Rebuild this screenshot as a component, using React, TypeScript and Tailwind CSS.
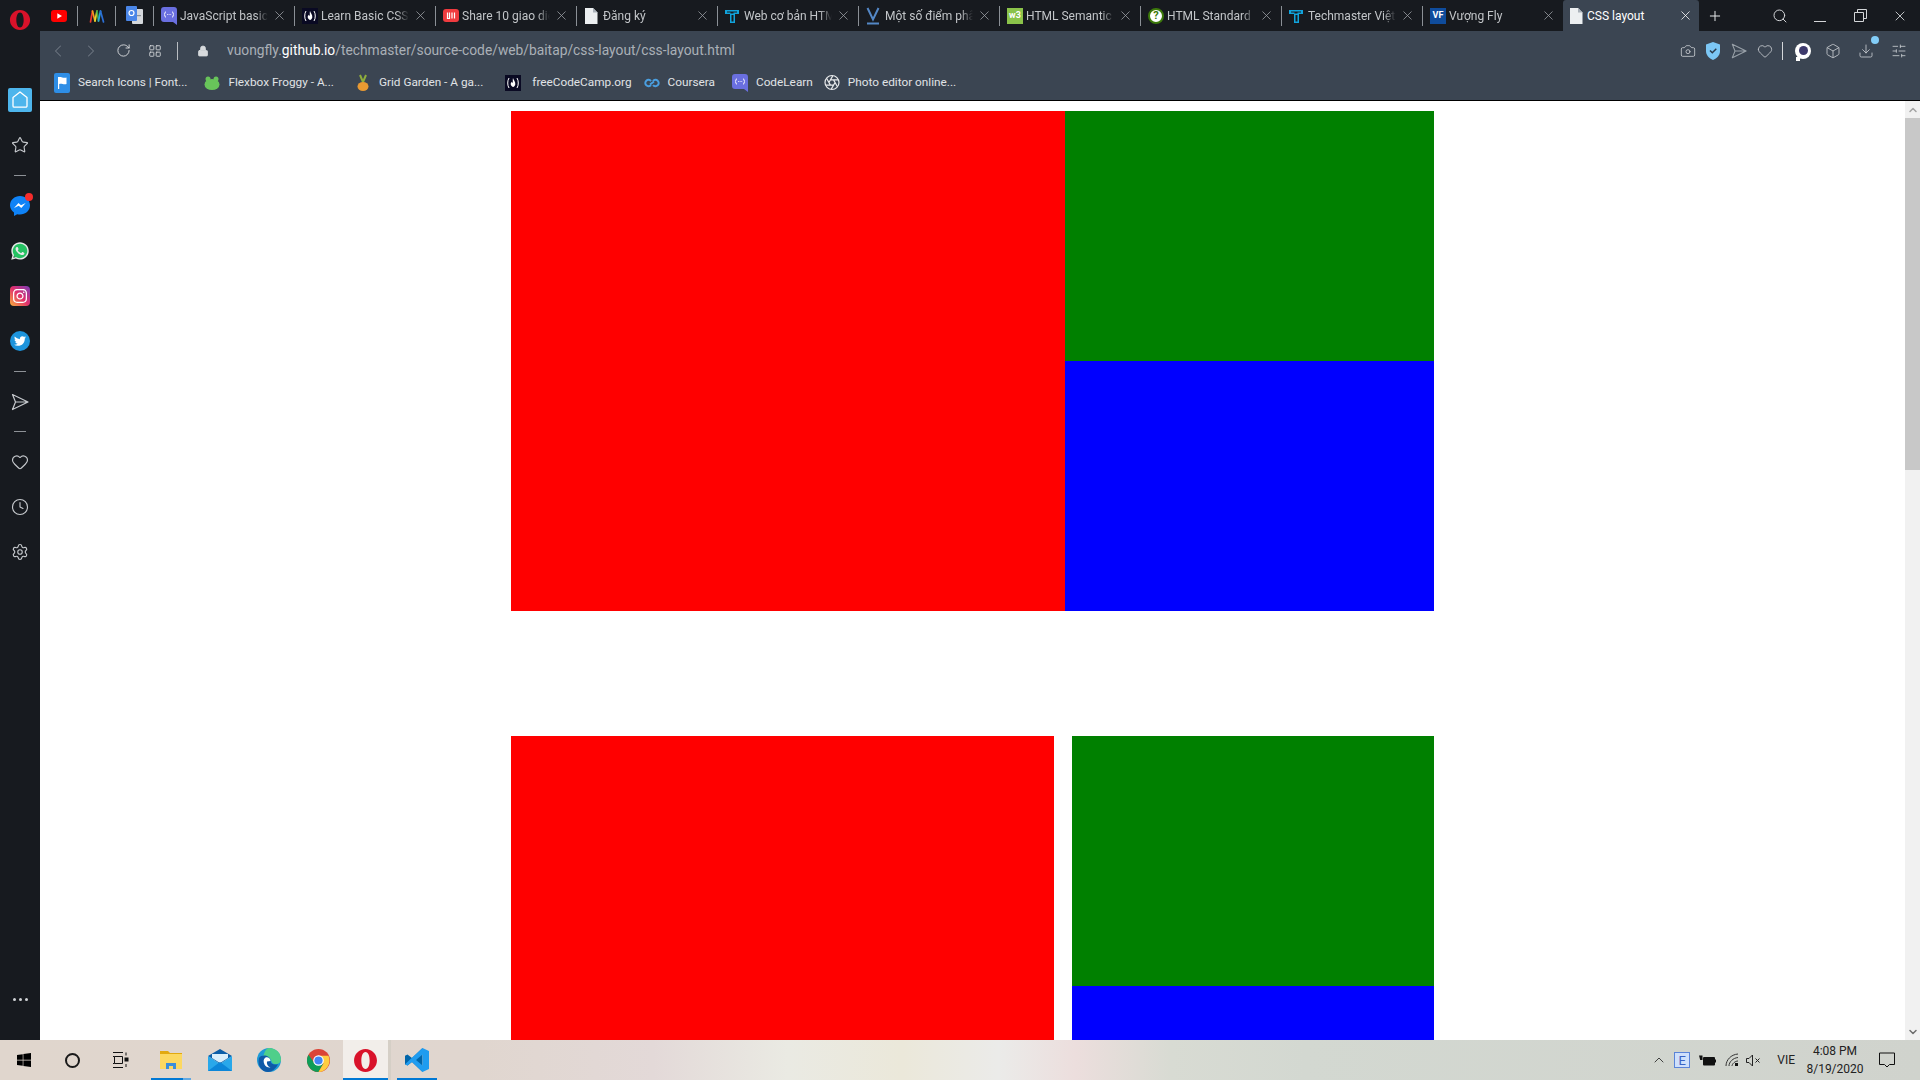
import React from 'react';
import {
  Box, Camera, ChevronLeft, ChevronRight, ChevronUp, Clock, Download, Heart, LayoutGrid, Lock, Plus, RotateCw,
  Search, Settings, SlidersHorizontal, Star, X,
} from 'lucide-react';
import { FaInstagram, FaTwitter, FaWhatsapp, FaWindows } from 'react-icons/fa';

const OperaLogo = ({ size }: { size: number }) => (
  <svg width={size} height={size} viewBox="0 0 24 24">
    <path fillRule="evenodd" fill="#d9122a" d="M12 1C5.900 1 1 6 1 12s4.900 11 11 11 11-5 11-11S18.100 1 12 1zm0 2.800c2.600 0 4 3.900 4 8.200s-1.400 8.200-4 8.200-4-3.900-4-8.200 1.400-8.200 4-8.200z" />
  </svg>
);

const FileIcon = () => (
  <svg width="14" height="16" viewBox="0 0 14 16">
    <path fill="#eceff1" d="M1 0h8l4.500 4.500V16H1z" />
    <path fill="#aab2ba" d="M9 0v4.500h4.500z" />
  </svg>
);

const YoutubeIcon = () => (
  <svg width="16" height="12" viewBox="0 0 16 12">
    <rect width="16" height="12" rx="3" fill="#f00" />
    <path d="M6.300 3.300v5.400L11 6z" fill="#fff" />
  </svg>
);

const RainbowIcon = () => (
  <svg width="16" height="16" viewBox="0 0 16 16" fill="none" strokeWidth="1.700" strokeLinecap="round">
    <path d="M1.500 14 3.500 3" stroke="#e8382f" />
    <path d="M3.500 3 6 13" stroke="#f29c1f" />
    <path d="M6 13 8 3" stroke="#e3d92a" />
    <path d="M8 3 9.500 13" stroke="#3aa84a" />
    <path d="M9.500 13 11.500 3" stroke="#29a4d9" />
    <path d="M11.500 3 14.500 14" stroke="#2b6fd6" />
  </svg>
);

const TranslateIcon = () => (
  <svg width="17" height="19" viewBox="0 0 17 19">
    <rect x="6" y="3" width="11" height="15" rx="1" fill="#d5d8dc" />
    <rect x="0" y="0" width="11" height="15" rx="1" fill="#4a86e8" />
    <circle cx="5.500" cy="7" r="2.500" fill="none" stroke="#fff" strokeWidth="1.200" />
    <rect x="11" y="9" width="4" height="1.200" fill="#8a9199" />
  </svg>
);

const CodeLearnIcon = () => (
  <svg width="16" height="18" viewBox="0 0 16 18">
    <path fill="#6a6fe0" d="M3 0h10a3 3 0 0 1 3 3v15l-4-3H3a3 3 0 0 1-3-3V3a3 3 0 0 1 3-3z" />
    <path d="M5 4.500C3.800 4.500 4.200 7.500 3 7.500c1.200 0 .8 3 2 3M11 4.500c1.200 0 .8 3 2 3-1.200 0-.8 3-2 3" stroke="#fff" strokeWidth=".9" fill="none" />
    <path d="M6 7.500h.8M7.700 7.500h.8M9.400 7.500h.8" stroke="#fff" strokeWidth=".9" />
  </svg>
);

const FreeCodeIcon = () => (
  <svg width="16" height="16" viewBox="0 0 16 16">
    <rect width="16" height="16" fill="#0a0a23" />
    <path d="M4 3C2.300 5.500 2.300 10.500 4 13M12 3c1.700 2.500 1.700 7.500 0 10" stroke="#fff" fill="none" strokeWidth="1" />
    <path d="M8 3c.6 2.300 2.600 3.700 2.300 6.200-.2 1.500-1.100 2.400-2.300 2.800-1.300-.4-2.300-1.400-2.300-2.900 0-1 .7-1.700 1.100-2.300.3.700.5 1 .9 1.200.3-1.600-.2-3.100.3-5z" fill="#fff" />
  </svg>
);

const ShareIcon = () => (
  <svg width="16" height="13" viewBox="0 0 16 13">
    <rect width="16" height="13" rx="3" fill="#ef3b3f" />
    <path d="M4.500 3.500v6h2v-6M9 3.500v6M11.500 3.500v6" stroke="#fff" strokeWidth="1.200" fill="none" />
  </svg>
);

const TechmasterIcon = () => (
  <svg width="14" height="14" viewBox="0 0 14 14">
    <path fill="#11a3dc" d="M0 1h14v4h-4v9H5V5H0zm2 1.500v1h3.500v1h3v-1H12v-1zM6.500 6v6.500h2V6z" fillRule="evenodd" />
  </svg>
);

const VibloIcon = () => (
  <svg width="14" height="18" viewBox="0 0 14 18" fill="none" stroke="#5488c7">
    <path d="M1.500 1 7 12.500 12.500 1" strokeWidth="2" />
    <path d="M1 16.500h12" strokeWidth="2" />
  </svg>
);

const W3Icon = () => (
  <span className="flex h-[16px] w-[16px] items-center justify-center bg-[#8bc34a] text-[9px] font-bold leading-none text-white">w3</span>
);

const WhatwgIcon = () => (
  <span className="flex h-[16px] w-[16px] items-center justify-center rounded-full border-2 border-[#3c790a] bg-white text-[11px] font-bold leading-none text-[#3c790a]">?</span>
);

const VFIcon = () => (
  <span className="flex h-[16px] w-[16px] items-center justify-center bg-[#0f4c9c] text-[9px] font-bold leading-none text-white">VF</span>
);

const FlagIcon = () => (
  <svg width="16" height="20" viewBox="0 0 16 20">
    <rect width="16" height="20" rx="2" fill="#2e8ee6" />
    <path fill="#fff" d="M4 4v12h1.200v-5c2.500-1 4 .8 7.300 0V4.500c-3.300.8-4.800-1-8.500-.5z" />
  </svg>
);

const FrogIcon = () => (
  <svg width="16" height="14" viewBox="0 0 16 14">
    <circle cx="4" cy="3" r="2.500" fill="#68c45a" />
    <circle cx="12" cy="3" r="2.500" fill="#68c45a" />
    <ellipse cx="8" cy="8.500" rx="7.500" ry="5.500" fill="#68c45a" />
  </svg>
);

const CarrotIcon = () => (
  <svg width="14" height="18" viewBox="0 0 14 18">
    <path d="M7 8 4 1M7 8l3-7" stroke="#8fae3c" strokeWidth="2" />
    <ellipse cx="7" cy="12.500" rx="5.500" ry="4.500" fill="#e99a32" />
  </svg>
);

const CourseraIcon = () => (
  <svg width="16" height="10" viewBox="0 0 16 10" fill="none" stroke="#4a9fe0" strokeWidth="2">
    <path d="M7 3a3.200 3.200 0 1 0 0 4M9 3a3.200 3.200 0 1 1 0 4" />
    <path d="M6 6.500 10 3.500" />
  </svg>
);

const ApertureIcon = () => (
  <svg width="17" height="17" viewBox="0 0 24 24" fill="none" stroke="#e8eaec" strokeWidth="1.800">
    <circle cx="12" cy="12" r="10.500" />
    <path d="m14.300 8 5.700 9.900M9.700 8h11.500M7.400 12l5.700-10M9.700 16 4 6.100M14.300 16H2.800M16.600 12l-5.700 10" />
  </svg>
);

const tabs = [
  { title: 'JavaScript basics', icon: <CodeLearnIcon /> },
  { title: 'Learn Basic CSS: Use', icon: <FreeCodeIcon /> },
  { title: 'Share 10 giao diện', icon: <ShareIcon /> },
  { title: 'Đăng ký', icon: <FileIcon /> },
  { title: 'Web cơ bản HTML', icon: <TechmasterIcon /> },
  { title: 'Một số điểm phân', icon: <VibloIcon /> },
  { title: 'HTML Semantic', icon: <W3Icon /> },
  { title: 'HTML Standard', icon: <WhatwgIcon /> },
  { title: 'Techmaster Việt', icon: <TechmasterIcon /> },
  { title: 'Vượng Fly', icon: <VFIcon /> },
];

const bookmarks = [
  { title: 'Search Icons | Font...', icon: <FlagIcon />, className: 'gap-[8px]' },
  { title: 'Flexbox Froggy - A...', icon: <FrogIcon />, className: 'gap-[8px]' },
  { title: 'Grid Garden - A ga...', icon: <CarrotIcon />, className: 'ml-[4px] gap-[8px]' },
  { title: 'freeCodeCamp.org', icon: <FreeCodeIcon />, className: 'ml-[5px] gap-[11px]' },
  { title: 'Coursera', icon: <CourseraIcon />, className: '-ml-[5px] gap-[8px]' },
  { title: 'CodeLearn', icon: <CodeLearnIcon />, className: 'gap-[8px]' },
  { title: 'Photo editor online...', icon: <ApertureIcon />, className: '-ml-[6px] gap-[8px]' },
];

const Dash = ({ className }: { className: string }) => (
  <div className={`flex items-center justify-center ${className}`}>
    <div className="h-px w-[12px] bg-[#8d9196]" />
  </div>
);

const SideItem = ({ children }: { children: React.ReactNode }) => (
  <div className="flex h-[45px] items-center justify-center">{children}</div>
);

const PaperPlane = ({ size, color }: { size: number; color: string }) => (
  <svg width={size} height={size} viewBox="0 0 18 18" fill="none" stroke={color} strokeWidth="1.200" strokeLinejoin="round">
    <path d="M1.500 1.500 17 9 1.500 16.500 4.500 9zM4.500 9H17" />
  </svg>
);

function Sidebar() {
  const icon = 'h-[18px] w-[18px] text-[#c6c9cd]';
  return (
    <aside className="flex w-[40px] shrink-0 flex-col bg-[#171a1f]">
      <div className="flex h-[77px] shrink-0 items-start justify-center pt-[9px]">
        <OperaLogo size={22} />
      </div>
      <SideItem>
        <div className="flex h-[24px] w-[24px] items-center justify-center rounded-[2px] bg-[#4db5ec]">
          <svg width="16" height="17" viewBox="0 0 16 17" fill="none" stroke="#fff" strokeWidth="1.300" strokeLinejoin="round">
            <path d="M8 1 15 6.500V15a1.200 1.200 0 0 1-1.200 1.200H2.200A1.200 1.200 0 0 1 1 15V6.500z" />
          </svg>
        </div>
      </SideItem>
      <SideItem><Star className={icon} strokeWidth={1.5} /></SideItem>
      <Dash className="h-[16px]" />
      <SideItem>
        <div className="relative h-[20px] w-[20px]">
          <svg width="20" height="20" viewBox="0 0 20 20">
            <path fill="#0f83f7" d="M10 0c5.500 0 10 4 10 9.300s-4.500 9.300-10 9.300c-1 0-2-.1-2.800-.4L4 20v-3.500C1.500 14.800 0 12.200 0 9.300 0 4 4.500 0 10 0z" />
            <path fill="#fff" d="m4 12 4.500-5 2.500 2.300L15.700 7 11.300 12 8.700 9.700z" />
          </svg>
          <span className="absolute right-[-3px] top-[-3px] h-[8px] w-[8px] rounded-full bg-[#f52c2c]" />
        </div>
      </SideItem>
      <SideItem>
        <div className="relative flex h-[20px] w-[20px] items-center justify-center">
          <span className="absolute h-[16px] w-[16px] rounded-full bg-[#25c162]" />
          <FaWhatsapp className="relative h-[20px] w-[20px] text-[#e6e8e8]" />
        </div>
      </SideItem>
      <SideItem>
        <div className="flex h-[20px] w-[20px] items-center justify-center rounded-[4px] bg-[linear-gradient(45deg,#f9b13c,#e1306c_50%,#7a3db8)]">
          <FaInstagram className="h-[16px] w-[16px] text-white" />
        </div>
      </SideItem>
      <SideItem>
        <div className="flex h-[20px] w-[20px] items-center justify-center rounded-full bg-[#1d94dc]">
          <FaTwitter className="h-[12px] w-[12px] text-white" />
        </div>
      </SideItem>
      <Dash className="h-[16px]" />
      <SideItem><PaperPlane size={18} color="#c6c9cd" /></SideItem>
      <Dash className="h-[15px]" />
      <SideItem><Heart className={icon} strokeWidth={1.5} /></SideItem>
      <SideItem><Clock className={icon} strokeWidth={1.5} /></SideItem>
      <SideItem><Settings className={icon} strokeWidth={1.5} /></SideItem>
      <div className="mt-auto flex h-[50px] items-start justify-center gap-[3px] pt-[8px]">
        <span className="h-[3px] w-[3px] rounded-full bg-[#d0d3d6]" />
        <span className="h-[3px] w-[3px] rounded-full bg-[#d0d3d6]" />
        <span className="h-[3px] w-[3px] rounded-full bg-[#d0d3d6]" />
      </div>
    </aside>
  );
}

const Separator = () => <div className="h-[20px] w-px shrink-0 bg-[#8b9096]" />;

function TabBar() {
  return (
    <div className="flex h-[31px] shrink-0 items-center bg-[#171a1f] [font-family:Roboto,sans-serif]">
      <div className="flex w-[37px] shrink-0 justify-center"><YoutubeIcon /></div>
      <Separator />
      <div className="flex w-[37px] shrink-0 justify-center"><RainbowIcon /></div>
      <Separator />
      <div className="flex w-[37px] shrink-0 justify-center"><TranslateIcon /></div>
      <Separator />
      {tabs.map((tab, i) => (
        <React.Fragment key={tab.title}>
          <div className="flex h-full w-[140px] shrink-0 items-center pl-[7px] pr-[7px]">
            <div className="flex w-[17px] shrink-0 justify-start">{tab.icon}</div>
            <span className="ml-[2px] min-w-0 flex-1 overflow-hidden whitespace-nowrap text-[12px] text-[#c2c5c8] [mask-image:linear-gradient(to_right,black_86%,transparent)]">{tab.title}</span>
            <X className="ml-[4px] h-[15px] w-[15px] shrink-0 text-[#9ea2a7]" strokeWidth={1.25} />
          </div>
          {i < tabs.length - 1 && <Separator />}
        </React.Fragment>
      ))}
      <div className="flex h-full w-[136px] shrink-0 items-center rounded-t-[3px] bg-[#3b4552] pl-[6px] pr-[6px]">
        <div className="flex w-[17px] shrink-0"><FileIcon /></div>
        <span className="ml-[1px] flex-1 text-[12px] text-white">CSS layout</span>
        <X className="h-[15px] w-[15px] text-white" strokeWidth={1.25} />
      </div>
      <div className="flex w-[32px] shrink-0 justify-center"><Plus className="h-[16px] w-[16px] text-[#e6e8ea]" strokeWidth={1.5} /></div>
      <div className="ml-auto flex">
        <div className="flex w-[40px] justify-center"><Search className="h-[16px] w-[16px] text-[#d4d6d9]" strokeWidth={1.5} /></div>
        <div className="flex w-[40px] items-center justify-center"><div className="mt-[12px] h-px w-[12px] bg-[#d4d6d9]" /></div>
        <div className="flex w-[40px] items-center justify-center">
          <svg width="13" height="13" viewBox="0 0 13 13" fill="none" stroke="#d4d6d9"><path d="M.5 3.500h9v9h-9zM3.500 3.500v-3h9v9h-3" /></svg>
        </div>
        <div className="flex w-[40px] justify-center"><X className="h-[16px] w-[16px] text-[#e0e2e4]" strokeWidth={1.25} /></div>
      </div>
    </div>
  );
}

function AddressBar() {
  const gray = 'h-[16px] w-[16px] text-[#c9cdd1]';
  return (
    <div className="flex h-[36px] shrink-0 items-center bg-[#3b4552] pt-[3px] [font-family:Roboto,sans-serif]">
      <div className="flex w-[34px] justify-center pl-[2px]"><ChevronLeft className="h-[20px] w-[20px] text-[#6f7883]" strokeWidth={1.25} /></div>
      <div className="flex w-[33px] justify-center"><ChevronRight className="h-[20px] w-[20px] text-[#6f7883]" strokeWidth={1.25} /></div>
      <div className="flex w-[32px] justify-center"><RotateCw className="h-[15px] w-[15px] text-[#d6d9dc]" strokeWidth={1.5} /></div>
      <div className="flex w-[32px] justify-center"><LayoutGrid className="h-[14px] w-[14px] text-[#d6d9dc]" strokeWidth={1.5} /></div>
      <div className="ml-[6px] h-[18px] w-px bg-[#b9bdc2]" />
      <div className="ml-[19px] flex w-[12px] justify-center"><Lock className="h-[14px] w-[14px] fill-[#d6d9dc] text-[#d6d9dc]" strokeWidth={1.5} /></div>
      <div className="ml-[18px] whitespace-nowrap text-[13.8px] text-[#aab0b7]">
        vuongfly.<span className="text-white">github.io</span>/techmaster/source-code/web/baitap/css-layout/css-layout.html
      </div>
      <div className="ml-auto flex items-center pr-[13px]">
        <Camera className={`${gray} mr-[9px]`} strokeWidth={1.25} />
        <svg className="mr-[10px]" width="16" height="18" viewBox="0 0 16 18">
          <path fill="#7cc7f5" d="M8 0 15 2.500V9c0 4-3 7.500-7 9-4-1.500-7-5-7-9V2.500z" />
          <path d="m5 8.500 2.300 2.300L11.300 6.800" stroke="#2a3a4a" strokeWidth="1.500" fill="none" />
        </svg>
        <div className="mr-[10px]"><PaperPlane size={16} color="#98a0a8" /></div>
        <Heart className="mr-[9px] h-[16px] w-[16px] text-[#c9cdd1]" strokeWidth={1.25} />
        <div className="mr-[12px] h-[18px] w-px bg-[#d4d7da]" />
        <div className="relative mr-[14px] flex h-[16px] w-[16px] items-center justify-center rounded-full bg-white">
          <span className="h-[9px] w-[9px] rounded-full bg-[#3d3a6c]" />
          <span className="absolute bottom-[-2px] left-[1px] h-[4px] w-[4px] bg-white" />
        </div>
        <Box className={`${gray} mr-[17px]`} strokeWidth={1.25} />
        <div className="relative mr-[17px]">
          <Download className={gray} strokeWidth={1.25} />
          <span className="absolute right-[-5px] top-[-7px] h-[8px] w-[8px] rounded-full bg-[#83cdf8]" />
        </div>
        <SlidersHorizontal className={gray} strokeWidth={1.25} />
      </div>
    </div>
  );
}

function BookmarkBar() {
  return (
    <div className="flex h-[33px] shrink-0 items-center gap-[17px] bg-[#3b4552] pb-[2px] pl-[14px] [font-family:Roboto,sans-serif]">
      {bookmarks.map((b) => (
        <div key={b.title} className={`flex items-center whitespace-nowrap text-[11.8px] text-[#e0e3e6] ${b.className}`}>
          <div className="flex w-[16px] shrink-0 justify-center">{b.icon}</div>
          {b.title}
        </div>
      ))}
    </div>
  );
}

function Layout({ redWidth, gap, greenWidth }: { redWidth: string; gap: string; greenWidth: string }) {
  return (
    <div className="flex h-[500px] w-[923px] shrink-0">
      <div className={`bg-[#ff0000] ${redWidth} ${gap}`} />
      <div className={`flex flex-col ${greenWidth}`}>
        <div className="h-[250px] bg-[#008000]" />
        <div className="h-[250px] bg-[#0000ff]" />
      </div>
    </div>
  );
}

function PageArea() {
  return (
    <div className="flex min-h-0 flex-1 border-t border-black bg-white">
      <main className="flex min-w-0 flex-1 flex-col items-center gap-[125px] overflow-hidden pt-[10px]">
        <Layout redWidth="w-[554px]" gap="" greenWidth="w-[369px]" />
        <Layout redWidth="w-[543px]" gap="mr-[18px]" greenWidth="w-[362px]" />
      </main>
      <div className="flex w-[15px] shrink-0 flex-col bg-[#f1f1f1]">
        <div className="flex h-[17px] shrink-0 items-center justify-center"><ChevronUp className="h-[12px] w-[12px] text-[#a3a3a3]" strokeWidth={3} /></div>
        <div className="h-[352px] shrink-0 bg-[#c8c8c8]" />
        <div className="mt-auto flex h-[17px] shrink-0 items-center justify-center"><ChevronUp className="h-[12px] w-[12px] rotate-180 text-[#6e6e6e]" strokeWidth={3} /></div>
      </div>
    </div>
  );
}

const TaskIcon = ({ children, width, line, active }: { children: React.ReactNode; width: string; line?: string; active?: boolean }) => (
  <div className={`relative flex h-full shrink-0 items-center justify-center ${width} ${active ? 'bg-[#f2eeea]' : ''}`}>
    {children}
    {line && <span className={`absolute bottom-0 h-[2px] ${line}`} />}
  </div>
);

function Taskbar() {
  return (
    <footer className="flex h-[40px] shrink-0 items-center bg-[linear-gradient(to_right,#e0d6cd_0%,#e0d6cf_25%,#e3d9d8_34%,#eaeae3_41%,#ebe8da_47%,#ebebe9_52%,#ecdedd_56%,#d8dbd3_61%,#d3d8d1_68%,#d0d3cd_100%)] [font-family:Roboto,sans-serif]">
      <TaskIcon width="w-[48px]"><FaWindows className="h-[16px] w-[16px] text-black" /></TaskIcon>
      <TaskIcon width="w-[48px]"><span className="h-[15px] w-[15px] rounded-full border-[2.5px] border-[#1a1a1a]" /></TaskIcon>
      <TaskIcon width="w-[48px]">
        <svg width="17" height="16" viewBox="0 0 17 16" fill="none" stroke="#111">
          <path d="M1 .5h10M1 15.500h10M2.500 4.500h8v7h-8zM1 4.500h1.500M1 11.500h1.500M14 .5v3M14 12v3" />
          <rect x="13" y="6" width="3" height="3" fill="#111" />
        </svg>
      </TaskIcon>
      <TaskIcon width="w-[48px] ml-[3px]" line="left-[4px] right-[4px] bg-[linear-gradient(to_right,#0078d4_80%,#62a9e2_80%)]">
        <svg width="22" height="18" viewBox="0 0 22 18">
          <path fill="#e2a90f" d="M0 0h8l2 2h12v3H0z" />
          <path fill="#fcd860" d="M0 3h22v15H0z" />
          <path fill="#3a8edb" d="M6 18v-6h10v6h-3v-3H9v3z" />
        </svg>
      </TaskIcon>
      <TaskIcon width="w-[49px]">
        <svg width="24" height="22" viewBox="0 0 24 22">
          <path fill="#0a5ea8" d="M0 7 12 0l12 7-12 8z" />
          <path fill="#29a8ea" d="M0 7l12 8 12-8v15H0z" />
          <path fill="#d8eefb" d="M4 5h16v4l-8 5-8-5z" />
          <path fill="#0c86d8" d="M0 22 12 13l12 9z" />
        </svg>
      </TaskIcon>
      <TaskIcon width="w-[49px]">
        <svg width="24" height="24" viewBox="0 0 24 24">
          <circle cx="12" cy="12" r="12" fill="#1e9ad6" />
          <path fill="#4fcf8a" d="M12 0c7 0 12 5 12 11.500 0 2.500-2 4.500-5 4.500-4 0-4-2-5-4-1-3-5-4-8-2.500C7 5 9 0 12 0z" />
          <path fill="#0f5aa8" d="M2 10c3-4 11-3 11.500 3 .3 4 5 4 7.500 3-2 4.500-6 8-10 8-6 0-11-6-9-14z" />
          <path fill="#fff" d="M13.500 13c0-3-3-4.500-5-3.500-2 1.200-2.500 4-1 7 1 2 3.500 3.500 6 3-3-1-4-4-3.500-6z" />
        </svg>
      </TaskIcon>
      <TaskIcon width="w-[50px]">
        <svg width="23" height="23" viewBox="0 0 24 24">
          <circle cx="12" cy="12" r="12" fill="#db4437" />
          <path fill="#0f9d58" d="M1.600 6a12 12 0 0 0 10.400 18l5-9H8z" />
          <path fill="#ffcd40" d="M12 7h10.400A12 12 0 0 1 12 24l5.200-9z" />
          <circle cx="12" cy="12" r="5.500" fill="#fff" />
          <circle cx="12" cy="12" r="4.300" fill="#4285f4" />
        </svg>
      </TaskIcon>
      <TaskIcon width="w-[45px]" active line="left-0 right-0 bg-[#0078d4]"><OperaLogo size={25} /></TaskIcon>
      <div className="h-full w-[3px] shrink-0 bg-[#d5cfc6]" />
      <TaskIcon width="w-[46px] ml-[3px]" line="left-[3px] right-[3px] bg-[#0078d4]">
        <svg width="24" height="24" viewBox="0 0 24 24">
          <path fill="#0065a9" d="M17.500 0 7 10 2.500 6.500 0 7.800v8.400l2.500 1.300L7 14l10.500 10V0z" />
          <path fill="#1f9cf0" d="M17.500 0 24 3v18l-6.500 3-10.500-10-4.500 3.500L0 16.200 17.500 0zm0 6.500L11 12l6.500 5.500z" fillRule="evenodd" />
        </svg>
      </TaskIcon>
      <div className="ml-auto flex h-full items-center text-[#222]">
        <ChevronUp className="mr-[7px] h-[16px] w-[16px]" strokeWidth={1.25} />
        <div className="mr-[9px] flex h-[16px] w-[16px] items-center justify-center border border-[#5a84d8] bg-[#cfe0fb] text-[13px] leading-none text-[#3a63c4]">E</div>
        <svg className="mr-[9px]" width="17" height="11" viewBox="0 0 17 11" fill="#111">
          <rect x="4" y="2" width="12" height="8.500" rx="1" />
          <path d="M0 .5h3.500V5H1.200zM16 4.500h1v3h-1z" />
        </svg>
        <svg className="mr-[7px]" width="14" height="14" viewBox="0 0 14 14" fill="none" stroke="#333">
          <path d="M1 13C1 7 6 1.500 13 1M4 13c0-4 4-8 9-8.500M7 13c0-2 3-5 6-5" />
          <rect x="10" y="10" width="3" height="3" fill="#111" stroke="none" />
        </svg>
        <svg className="mr-[16px]" width="15" height="13" viewBox="0 0 15 13" fill="none" stroke="#222">
          <path d="M.5 4.500h2.500L6.500 1v11L3 8.500H.5zM9.500 4.500l4 4M13.500 4.500l-4 4" />
        </svg>
        <span className="mr-[9px] text-[12px]">VIE</span>
        <div className="mr-[13px] flex w-[62px] flex-col items-center text-[12px] leading-[18px]">
          <span>4:08 PM</span>
          <span>8/19/2020</span>
        </div>
        <svg className="mr-[25px]" width="16" height="16" viewBox="0 0 16 16" fill="none" stroke="#111">
          <path d="M.5 1h15v11.500h-5L8 15l-2.500-2.500h-5z" />
        </svg>
      </div>
    </footer>
  );
}

export default function App() {
  return (
    <div className="flex h-screen w-full flex-col overflow-hidden">
      <div className="flex min-h-0 flex-1">
        <Sidebar />
        <div className="flex min-w-0 flex-1 flex-col">
          <TabBar />
          <AddressBar />
          <BookmarkBar />
          <PageArea />
        </div>
      </div>
      <Taskbar />
    </div>
  );
}
